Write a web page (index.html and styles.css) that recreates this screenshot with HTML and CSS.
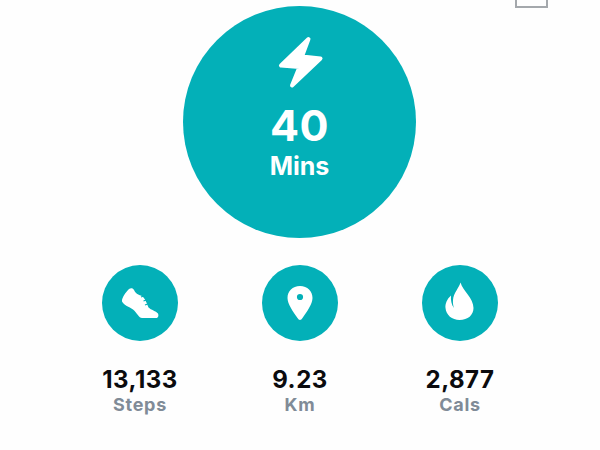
FILE: index.html
```html
<!DOCTYPE html>
<html lang="en">
<head>
<meta charset="utf-8">
<title>Activity</title>
<link rel="stylesheet" href="styles.css">
</head>
<body>
<main class="page">
  <div class="corner-box"></div>
  <section class="hero">
    <svg class="bolt" viewBox="0 0 50 56"><path d="M32.500 5 L5 31.500 L23.500 33 L16 51.500 L44.500 24.500 L26 22.500 Z"/></svg>
    <div class="hero-value">40</div>
    <div class="hero-label">Mins</div>
  </section>
  <section class="stats">
    <div class="stat">
      <div class="badge">
        <svg viewBox="0 0 76 76"><path class="fill" d="M27 24 C29 22.500 31 23 32 25 C33 28 36 30 40 31 C43 33 45 39 46.500 42.500 C49 45 54 46 56 48.500 C57 51 56 53 54 53 L40 53 C37 53 35 48 31 44.500 C27 41.500 22 40.500 20 36.500 C19.500 33 24 27 27 24 Z"/><path class="lace" d="M39 32 l4 -1.500 M41.500 36 l4 -1.500 M43 40 l4 -1.500"/></svg>
      </div>
      <div class="stat-value">13,133</div>
      <div class="stat-label">Steps</div>
    </div>
    <div class="stat">
      <div class="badge">
        <svg viewBox="0 0 76 76"><path class="fill" fill-rule="evenodd" d="M38 21 C45.500 21 50.500 26 50.500 33 C50.500 39 45 46.500 40.500 53 C39 55.500 37 55.500 35.500 53 C31 46.500 25.500 39 25.500 33 C25.500 26 30.500 21 38 21 Z M38 28.900 A3.100 3.100 0 1 0 38 35.100 A3.100 3.100 0 1 0 38 28.900 Z"/></svg>
      </div>
      <div class="stat-value">9.23</div>
      <div class="stat-label">Km</div>
    </div>
    <div class="stat">
      <div class="badge">
        <svg viewBox="0 0 76 76"><path class="fill" d="M38.500 17.500 C37 23 31.500 28 31 35 C30.800 38 31 40 32 43 C29.500 40 28.500 35 29 30.500 C25 34 23 39 23.500 43 C24 50 30 55 37.500 55 C46 55 51.500 50 51.500 43 C51.500 33 41 26 38.500 17.500 Z"/></svg>
      </div>
      <div class="stat-value">2,877</div>
      <div class="stat-label">Cals</div>
    </div>
  </section>
</main>
</body>
</html>
```
FILE: styles.css
```css
* { box-sizing: border-box; }
html, body { margin: 0; height: 100%; }
body { background: #fefefe; font-family: Inter, "Liberation Sans", sans-serif; }
.page { position: relative; width: 600px; height: 450px; padding-top: 6px; overflow: hidden; display: flex; flex-direction: column; align-items: center; }
.corner-box { position: absolute; left: 515px; top: -10px; width: 33px; height: 18px; border: 2px solid #a4a8ac; }
.hero { width: 233px; height: 232px; margin-left: -1px; border-radius: 50%; background: #03b0b8; color: #fff; display: flex; flex-direction: column; align-items: center; padding-top: 28px; }
.bolt { width: 50px; height: 56px; margin-left: 2px; }
.bolt path { fill: #fff; stroke: #fff; stroke-width: 4; stroke-linejoin: round; }
.hero-value { font-size: 43px; font-weight: 700; line-height: 50px; margin-top: 10px; letter-spacing: 0.5px; }
.hero-label { font-size: 25px; font-weight: 700; line-height: 30px; margin-top: 1px; }
.stats { display: flex; gap: 84px; margin-top: 27px; }
.stat { width: 76px; display: flex; flex-direction: column; align-items: center; }
.badge { width: 76px; height: 76px; border-radius: 50%; background: #03b0b8; }
.badge svg { display: block; width: 76px; height: 76px; }
.fill { fill: #fff; }
.lace { fill: none; stroke: #03b0b8; stroke-width: 1.200; }
.stat-value { font-size: 24px; font-weight: 700; line-height: 28px; margin-top: 25px; color: #0b0b0e; white-space: nowrap; letter-spacing: 0.5px; }
.stat-label { font-size: 18px; font-weight: 700; line-height: 22px; color: #808b97; white-space: nowrap; letter-spacing: 0.7px; }
```
